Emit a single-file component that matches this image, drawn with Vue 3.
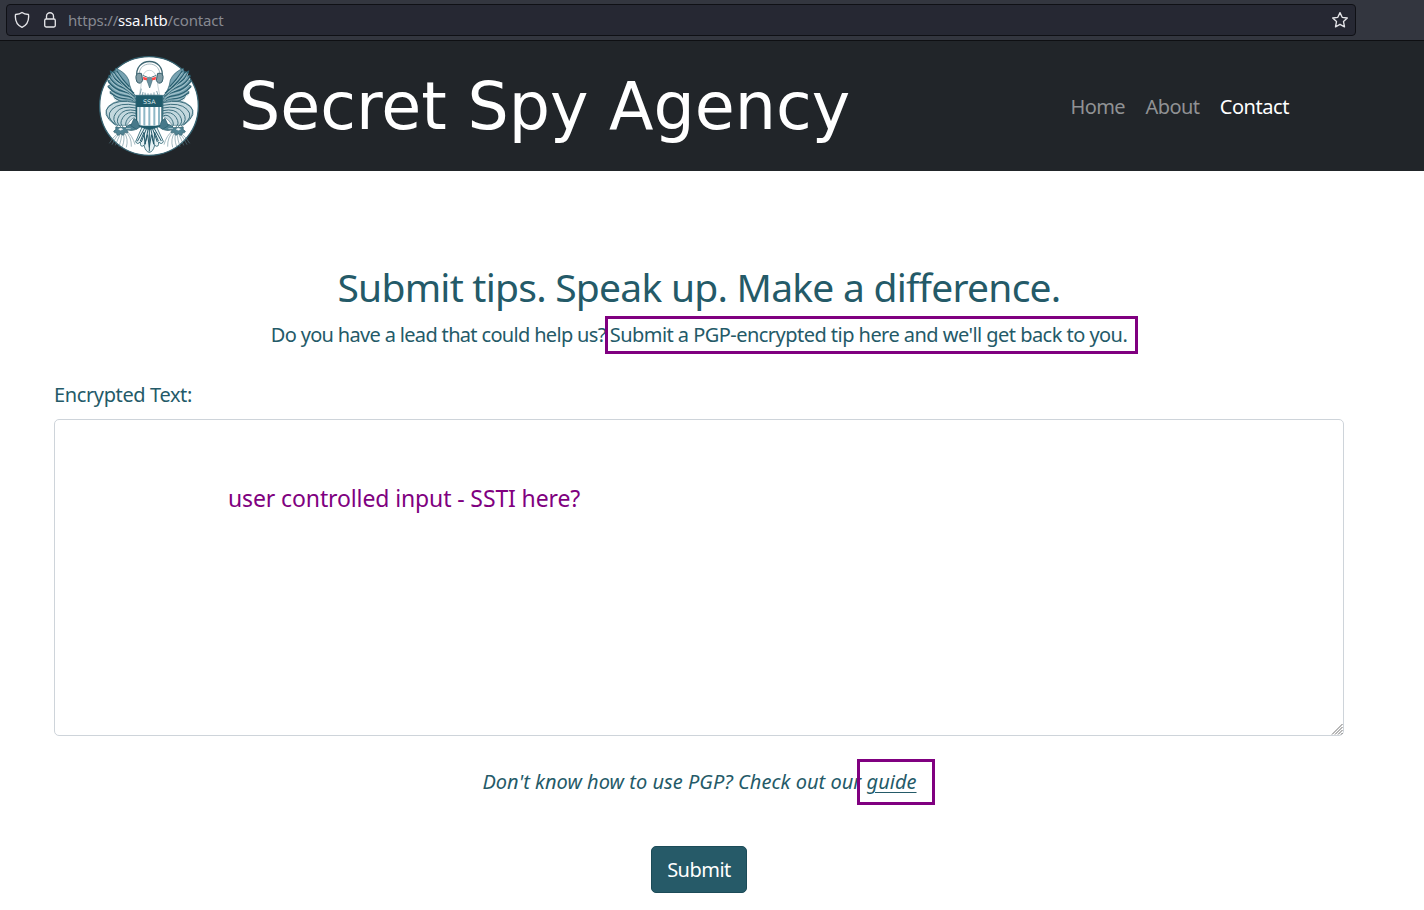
<script setup>
import { ref } from 'vue'

const message = ref('')
const links = [
  { label: 'Home', active: false },
  { label: 'About', active: false },
  { label: 'Contact', active: true },
]

// Feathers fan outward from the shoulder of each wing.
const feathers = [
  'M62 76Q70 98 84 106T132 142', 'M56 90Q70 114 92 122T134 151',
  'M54 105Q72 130 100 136T136 159', 'M54 122Q76 146 104 149T138 167',
  'M60 140Q84 158 108 158T138 175', 'M72 154Q92 170 138 181',
  'M80 74Q92 96 118 122', 'M70 76Q84 102 124 134',
]
const arms = [
  'M138 170Q82 158 57 181T74 236', 'M138 178Q88 168 66 190T78 238',
  'M138 186Q94 177 78 200T84 239', 'M138 194Q102 186 88 208T93 242',
  'M138 202Q112 194 99 214T100 243', 'M136 209Q122 204 112 220T112 244',
]
const tassels = [
  'M86 260Q66 276 58 292', 'M87 263Q74 278 66 296', 'M91 264Q82 282 76 298',
  'M96 262Q94 282 87 302', 'M99 261Q106 276 97 302', 'M103 260Q116 279 109 304',
  'M106 257Q125 272 124 302', 'M108 253Q128 269 135 296',
]
</script>

<template>
  <div class="browser-bar">
    <div class="address">
      <svg class="shield" viewBox="0 0 16 18"><path d="M8 1.4C6 3.1 3.8 3.4 1.5 3.5C.8 9.4 3.1 14.1 8 16.4C12.9 14.1 15.2 9.4 14.5 3.5C12.2 3.4 10 3.1 8 1.4Z" /></svg>
      <svg class="lock" viewBox="0 0 14 18"><path d="M3.5 8V5.2a3.5 3.5 0 0 1 7 0V8" /><rect x="1.7" y="8" width="10.6" height="8" rx="1.4" /></svg>
      <span class="url">https://<b>ssa.htb</b>/contact</span>
      <svg class="star" viewBox="0 0 18 18"><path d="M9 1.6 11.2 6.3 16.3 7 12.5 10.6 13.5 15.9 9 13.3 4.5 15.9 5.5 10.6 1.7 7 6.8 6.3Z" /></svg>
    </div>
  </div>

  <header class="navbar">
    <svg class="seal" viewBox="27 30 300 300">
      <circle cx="177" cy="180" r="148" fill="#fff" stroke="#35616f" stroke-width="4" />
      <g v-for="side in 2" :key="side" :transform="side === 2 ? 'translate(357 0) scale(-1 1)' : undefined">
        <path class="wing" d="M77 67Q106 78 116 102Q120 134 140 152V184Q103 173 77 157L69 150 74 147 59 138 66 134 53 120 62 117 53 102 63 103 56 87 67 91 60 74 74 81Z" />
        <path v-for="d in feathers" :key="d" class="feather" :d="d" />
        <path v-for="d in feathers" :key="'l' + d" class="shine" :d="d" transform="translate(1 6)" />
        <path class="arm-fill" d="M138 168Q82 154 55 181Q40 200 62 222L80 238H110L122 222 138 210Z" />
        <path v-for="d in arms" :key="d" class="arm" :d="d" />
        <path class="claw" d="M139 237Q118 230 106 245L85 244Q74 238 78 250Q63 260 80 261Q81 274 92 263Q104 274 103 259Q120 264 110 251Q130 257 143 247Z" />
        <path class="claw-light" d="M86 250Q93 243 98 250Q91 255 86 250M108 248H122" />
        <path v-for="d in tassels" :key="d" class="tassel" :d="d" />
      </g>
      <path class="tail" d="M158 239L137 287Q142 298 151 287Q150 307 162 298Q167 318 178 319Q189 318 194 298Q207 307 206 288Q216 298 220 286L198 239Z" />
      <path class="tail-lines" d="M164 246L142 286M170 246L154 288M175 247L164 298M178 247V316M182 247L193 298M187 246L202 288M192 246L214 285M151 285L162 259 165 294 173 266 178 304 184 266 191 294 194 259 205 285" />
      <path class="neck" d="M155 98Q154 121 148 147H209Q203 121 201 98Q193 72 178 73Q163 72 155 98Z" />
      <path class="neck-lines" d="M154 128L150 146M159 138L157 149M165 140L166 149M174 142V149M183 142V149M192 139V149M200 135L204 147" />
      <path class="headband" d="M141 96C129 30 228 30 216 96" />
      <path class="headband-inner" d="M148 90C143 42 214 42 209 90" />
      <path class="earpiece" d="M144 82Q133 88 141 108Q152 117 158 103L154 82ZM213 82Q224 88 216 108Q205 117 199 103L203 82Z" />
      <path class="brow" d="M158 88L173 94M199 88L184 94" />
      <path class="beak" d="M169 99Q178 88 188 99L184 112 179 126 174 112Z" />
      <path class="eyes" d="M159 92L172 96 170 103 160 101ZM185 96L198 92 197 101 187 103Z" />
      <path class="shield-base" d="M138 148H218V239Q199 245 178 251Q158 245 138 239Z" />
      <path class="shield-stripes" d="M142 183H214V236Q178 243 142 236Z" />
      <path class="stripes" d="M149 183V237M163 183V239M178 183V240M193 183V239M207 183V237" />
      <text x="178" y="174" text-anchor="middle" class="initials">SSA</text>
      <path class="feet" d="M132 217L122 239 139 250 149 244 143 226ZM225 217L235 239 218 250 208 244 214 226Z" />
    </svg>
    <div class="brand">Secret Spy Agency</div>
    <nav class="links">
      <a v-for="link in links" :key="link.label" :class="{ active: link.active }">{{ link.label }}</a>
    </nav>
  </header>

  <main class="content">
    <h1><span>Submit tips. Speak up. Make a difference.</span></h1>
    <p class="lead">
      <span class="lead-start">Do you have a lead that could help us?</span>
      <span class="marked">Submit a PGP-encrypted tip here and we'll get back to you.<i class="frame"></i></span>
    </p>
    <label for="tip">Encrypted Text:</label>
    <div class="field">
      <textarea id="tip" v-model="message"></textarea>
      <span class="note">user controlled input - SSTI here?</span>
      <svg class="grip" viewBox="0 0 12 12"><path d="M1 11.5 11.5 1M4 11.5 11.5 4M7 11.5 11.5 7M10 11.5 11.5 10" /></svg>
    </div>
    <p class="help"><span>Don't know how to use PGP? Check out our</span> <a class="guide">guide<i class="frame"></i></a></p>
    <button type="button">Submit</button>
  </main>
</template>

<style>
body { background: #fff; overflow: hidden; }
</style>

<style scoped>
.browser-bar, .navbar, .content { font-family: "Noto Sans", sans-serif; box-sizing: border-box; }
.browser-bar { height: 41px; padding: 4px 68px 4px 6px; background: #33363f; border-bottom: 1px solid #0e0f12; }
.address { height: 32px; box-sizing: border-box; display: flex; align-items: center; background: #262833; border: 1px solid #0f1015; border-radius: 4px; padding: 0 6px 0 7px; }
.address svg { fill: none; stroke: #e4e4e8; stroke-width: 1.35; stroke-linejoin: round; flex: none; }
.shield { width: 16px; height: 18px; }
.lock { width: 14px; height: 18px; margin-left: 13px; }
.star { width: 18px; height: 18px; margin-left: auto; }
.url { margin-left: 11px; font-size: 15px; line-height: 20px; color: #868891; white-space: nowrap; letter-spacing: -.2px; }
.url b { color: #fbfbfe; font-weight: 400; }

.navbar { height: 130px; display: flex; align-items: center; background: #212529; padding: 0 135px 0 99px; }
.seal { width: 100px; height: 100px; flex: none; }
.brand { margin: 2px 0 0 40px; color: #fff; font: 65px/78px "DejaVu Sans", sans-serif; white-space: nowrap; }
.links { margin: 2px 0 0 auto; display: flex; gap: 20.5px; font-size: 20px; line-height: 30px; letter-spacing: -.6px; }
.links a { color: #909294; }
.links .active { color: #fff; letter-spacing: -.45px; }

.wing { fill: #78a3b2; stroke: #245968; stroke-width: 2; }
.feather { fill: none; stroke: #2a6071; stroke-width: 4; }
.shine { fill: none; stroke: #bdd4da; stroke-width: 2; }
.arm-fill { fill: #c3d8de; stroke: #4d7c8b; stroke-width: 2; }
.arm { fill: none; stroke: #3d6f7e; stroke-width: 3; }
.claw { fill: #4f8292; stroke: #225563; stroke-width: 2; }
.claw-light { fill: #fff; stroke: #e1edf0; stroke-width: 2; }
.tassel { fill: none; stroke: #5c8491; stroke-width: 1.7; }
.tail { fill: #e6f1f4; stroke: #28606f; stroke-width: 2.5; }
.tail-lines { fill: none; stroke: #24596a; stroke-width: 3; }
.neck { fill: #fff; stroke: #aabcc2; stroke-width: 2; }
.neck-lines { stroke: #84a5b0; stroke-width: 3; }
.headband { fill: none; stroke: #3f6773; stroke-width: 4; }
.headband-inner { fill: none; stroke: #7c99a2; stroke-width: 2; }
.earpiece { fill: #819ca5; stroke: #38616e; stroke-width: 3; }
.brow { fill: none; stroke: #537984; stroke-width: 3; }
.beak { fill: #6c919e; stroke: #406b79; stroke-width: 2; }
.eyes { fill: #ff4646; }
.shield-base { fill: #205b6b; stroke: #2d6574; stroke-width: 2; }
.shield-stripes { fill: #fff; }
.stripes { fill: none; stroke: #8fb8c6; stroke-width: 6; }
.initials { fill: #dce9ec; font: 19px "DejaVu Sans", sans-serif; }
.feet { fill: #47798a; stroke: #255c6b; stroke-width: 2; }

.content { width: 1398px; height: 739px; padding: 86px 54px 0; color: #245a68; text-align: center; font-size: 20px; line-height: 30px; }
h1 { margin: 6px 0 9px; font-size: 39px; line-height: 48px; font-weight: 400; white-space: nowrap; letter-spacing: -.76px; }
.lead { margin: 0; white-space: nowrap; }
.lead-start { letter-spacing: -.67px; }
.marked { margin-left: 4px; letter-spacing: -.54px; }
.marked, .guide { position: relative; }
.frame { position: absolute; box-sizing: border-box; border: 3px solid #800080; }
.marked .frame { left: -5px; right: -11px; top: -5px; height: 38px; }
label { display: block; margin-top: 30px; text-align: left; letter-spacing: -.38px; }
.field { position: relative; height: 317px; margin-top: 9px; }
textarea { display: block; width: 100%; height: 100%; box-sizing: border-box; resize: none; background: #fff; border: 1px solid #ced4da; border-radius: 5px; outline: none; }
.note { position: absolute; left: 174px; top: 62px; color: #800080; font-size: 23px; line-height: 34px; white-space: nowrap; letter-spacing: -.12px; }
.grip { position: absolute; right: 1px; bottom: 1px; width: 12px; height: 12px; stroke: #606060; stroke-width: .9; }
.help { margin: 31px 0 0 1px; font-style: italic; white-space: nowrap; letter-spacing: .02px; }
.guide { text-decoration: underline; text-decoration-thickness: 1px; text-underline-offset: 3px; }
.guide .frame { left: -10px; right: -18px; top: -9px; height: 46px; }
button { margin-top: 49px; width: 96px; height: 47px; padding: 0; background: #265a68; color: #fff; border: 1px solid #1c4b58; border-radius: 5px; font: 20px/30px "Noto Sans", sans-serif; letter-spacing: -.5px; }
</style>
